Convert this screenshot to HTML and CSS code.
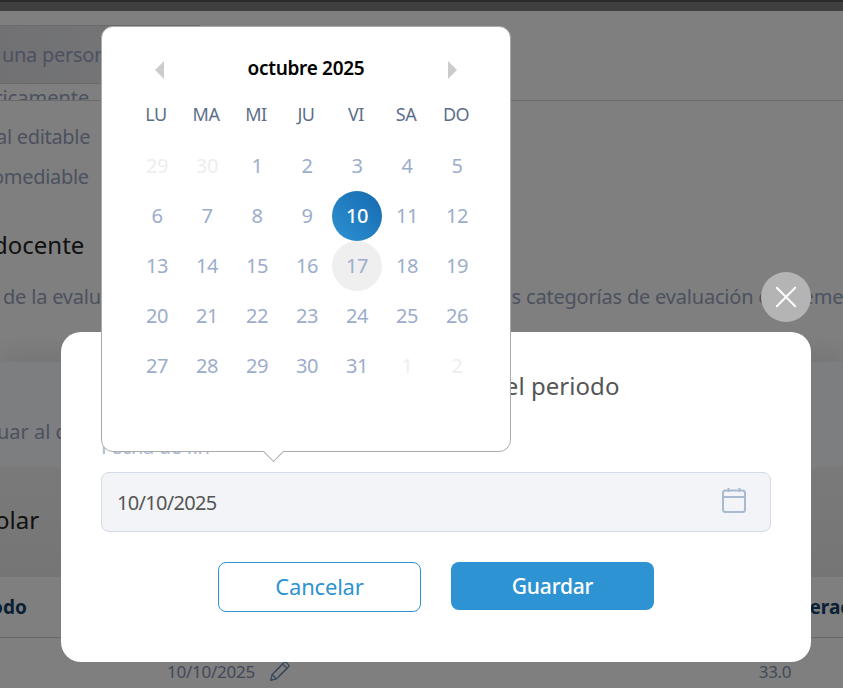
FILE: index.html
```html
<!DOCTYPE html>
<html lang="es">
<head>
<meta charset="utf-8">
<title>Fecha de fin del periodo</title>
<link rel="stylesheet" href="styles.css">
</head>
<body>
<div class="page">
  <div class="topbar"></div>
  <div class="search-row"><span class="search-text">una persona</span></div>
  <ul class="options">
    <li class="opt-cut"><span class="opt-first">tricamente</span></li>
    <li class="opt-a">al editable</li>
    <li class="opt-b">omediable</li>
  </ul>
  <h2 class="h-docente">docente</h2>
  <p class="desc">de la evaluación docente se calcula conforme a todas las categorías de evaluación en elementos</p>
  <div class="panel"><span class="panel-text">uar al docente</span></div>
  <div class="olar-section"><h2 class="h-olar">olar</h2></div>
  <div class="thead"><b class="th-a">odo</b><b class="th-b">Ponderación</b></div>
  <div class="trow">
    <span class="td-date">10/10/2025</span>
    <svg class="pencil" viewBox="0 0 24 24" fill="none" stroke="currentColor" stroke-width="1.5" stroke-linejoin="round" aria-hidden="true"><path d="M2 22l1.600-6.600L17.400 1.600a1.600 1.600 0 0 1 2.300 0l2.700 2.700a1.600 1.600 0 0 1 0 2.300L8.600 20.400z"/><path d="M15.600 3.400l5 5M3.600 15.400l5 5M6.500 12.500l10-10M11.500 17.500l10-10"/></svg>
    <span class="td-num">33.0</span>
  </div>
</div>

<div class="overlay">
  <div class="dialog-wrap">
    <button class="close" type="button" aria-label="Cerrar">
      <svg viewBox="0 0 24 24" fill="none" stroke="#fff" stroke-width="2.200" stroke-linecap="round" aria-hidden="true"><path d="M2 2l20 20M22 2L2 22"/></svg>
    </button>
    <div class="modal">
      <h3 class="modal-title">Editar la fecha de fin del periodo</h3>
      <label class="field-label">Fecha de fin</label>
      <div class="field">
        <span class="field-value">10/10/2025</span>
        <svg class="cal-icon" viewBox="0 0 24 26" fill="none" stroke="#a9b9d1" stroke-width="2" stroke-linejoin="round" aria-hidden="true"><rect x="1" y="3.500" width="22" height="21.500" rx="2.500"/><path d="M1 10h22M6.500 1v4M17.500 1v4"/></svg>
      </div>
      <div class="actions">
        <button class="btn btn-outline" type="button">Cancelar</button>
        <button class="btn btn-solid" type="button">Guardar</button>
      </div>
      <div class="calendar">
        <div class="cal-head">
          <span class="arrow arrow-left"></span>
          <span class="cal-title">octubre 2025</span>
          <span class="arrow arrow-right"></span>
        </div>
        <div class="cal-grid weekdays">
          <span>LU</span><span>MA</span><span>MI</span><span>JU</span><span>VI</span><span>SA</span><span>DO</span>
        </div>
        <div class="cal-grid days">
          <span class="off">29</span><span class="off">30</span><span>1</span><span>2</span><span>3</span><span>4</span><span>5</span>
          <span>6</span><span>7</span><span>8</span><span>9</span><span class="selected">10</span><span>11</span><span>12</span>
          <span>13</span><span>14</span><span>15</span><span>16</span><span class="today">17</span><span>18</span><span>19</span>
          <span>20</span><span>21</span><span>22</span><span>23</span><span>24</span><span>25</span><span>26</span>
          <span>27</span><span>28</span><span>29</span><span>30</span><span>31</span><span class="off">1</span><span class="off">2</span>
        </div>
        <span class="notch"></span>
      </div>
    </div>
  </div>
</div>
</body>
</html>
```

FILE: styles.css
```css
* { box-sizing: border-box; }
html, body { margin: 0; height: 100%; overflow: hidden; }
body { font-family: "Noto Sans", "Open Sans", sans-serif; background: #fff; }

/* page beneath the overlay */
.page { height: 688px; overflow: hidden; font-size: 20px; color: #98a3c0; }
.topbar { height: 11px; background: #7e7e7e; border-top: 2px solid #545454; }
.search-row {
  width: 200px; height: 59px; margin-top: 14px; padding-left: 2px;
  display: flex; align-items: center;
  background: linear-gradient(90deg, #e2e3e8, #eeeef0);
  border-top: 1px solid #d4d4d4; border-bottom: 1px solid #d4d4d4;
}
.search-text { letter-spacing: -.3px; }
.options { list-style: none; margin: 0; padding: 0; }
.opt-cut { height: 17px; overflow: hidden; border-bottom: 1px solid #d4d4d4; }
.opt-first { display: block; margin: -6px 0 0 -13px; line-height: 40px; }
.opt-a, .opt-b { height: 40px; line-height: 40px; letter-spacing: -.3px; }
.opt-a { margin: 16px 0 0 -4px; }
.opt-b { margin-left: -8px; }
.h-docente { margin: 32px 0 0 -7px; font-size: 24px; line-height: 32px; font-weight: 400; color: #222; }
.desc { margin: 21px 0 0 3px; line-height: 30px; white-space: nowrap; letter-spacing: -.2px; }
.panel {
  height: 105px; margin-top: 50px; padding: 55px 0 0; background: #fbfcfe;
  box-shadow: 0 -14px 20px rgba(0,0,0,.07);
  line-height: 30px;
}
.panel-text { margin-left: -3px; display: inline-block; }
.olar-section { height: 110px; padding-top: 37px; background: linear-gradient(180deg, #f4f4f4, #ebebeb); }
.h-olar { margin: 0 0 0 -5px; font-size: 24px; line-height: 32px; font-weight: 400; color: #222; }
.thead {
  height: 61px; display: flex; align-items: center; justify-content: space-between;
  background: #fff; border-bottom: 1px solid #d0d0d0; color: #14406a; font-size: 19px;
}
.th-a { margin-left: -9px; }
.th-b { margin-right: -37px; }
.trow { display: flex; align-items: center; height: 66px; padding-left: 167px; font-size: 17px; color: #8592b4; }
.td-date { letter-spacing: -.25px; }
.pencil { width: 21px; height: 21px; margin: 1px 0 0 14px; color: #6d8fb8; }
.td-num { margin-left: auto; margin-right: 52px; letter-spacing: -.4px; }

/* overlay + dialog */
.overlay { position: fixed; inset: 0; background: rgba(0,0,0,.5); overflow: hidden; }
.dialog-wrap { position: absolute; left: 61px; top: 332px; width: 750px; }
.close {
  position: absolute; right: 0; top: -60px; width: 50px; height: 50px; padding: 14px;
  border: 0; border-radius: 50%; background: #b5b4b4; display: flex;
}
.close svg { width: 22px; height: 22px; }
.modal {
  position: relative; height: 330px; padding: 34px 40px 0; background: #fff; border-radius: 20px;
}
.modal-title { margin: 0; text-align: center; font-size: 24px; line-height: 40px; font-weight: 400; color: #555; letter-spacing: .05px; white-space: nowrap; }
.field-label { display: block; margin-top: 28px; height: 30px; line-height: 26px; font-size: 20px; color: #a9b9d1; letter-spacing: -.4px; }
.field {
  height: 60px; margin-top: 8px; padding: 0 24px 0 15px; display: flex; align-items: center; justify-content: space-between;
  background: #f2f4f7; border: 1px solid #d2dbe6; border-radius: 8px;
}
.field-value { font-size: 20px; color: #555; letter-spacing: -.7px; }
.cal-icon { width: 24px; height: 26px; margin-top: -4px; }
.actions { display: flex; justify-content: center; gap: 30px; margin-top: 30px; align-items: flex-start; }
.btn { width: 203px; border-radius: 8px; font: 500 21px "Noto Sans", sans-serif; letter-spacing: -.2px; }
.btn-outline { height: 50px; padding-bottom: 4px; background: #fff; color: #2d93d3; border: 1px solid #2d93d3; font-weight: 400; font-size: 22px; }
.btn-solid { height: 48px; padding-bottom: 2px; background: #2d93d3; color: #fff; border: 0; }

/* date picker */
.calendar {
  position: absolute; left: 40px; top: -306px; width: 410px; height: 426px;
  padding: 21px 30px 0; background: #fff; border: 1px solid #aaa; border-radius: 12px;
}
.cal-head { display: flex; align-items: center; justify-content: space-between; height: 40px; padding: 0 23px; }
.cal-title { font-size: 19px; font-weight: 600; color: #000; letter-spacing: -.3px; }
.arrow { width: 0; height: 0; margin-top: 3px; border-top: 9px solid transparent; border-bottom: 9px solid transparent; }
.arrow-left { border-right: 9px solid #ccc; }
.arrow-right { border-left: 9px solid #ccc; }
.cal-grid { display: grid; grid-template-columns: repeat(7, 50px); }
.cal-grid span { display: flex; align-items: center; justify-content: center; }
.weekdays { margin-top: 6px; margin-left: -1px; height: 40px; font-size: 18px; color: #5d6f88; letter-spacing: -.5px; }
.weekdays span { height: 40px; }
.days { margin-top: 7px; grid-auto-rows: 50px; font-size: 20px; color: #9cadcb; letter-spacing: -.4px; }
.days span { border-radius: 50%; padding-bottom: 2px; }
.days .off { color: #eee; }
.days .selected { color: #fff; font-weight: 500; background: linear-gradient(45deg, #2d93d3, #1668af); }
.days .today { background: #efefef; }
.notch {
  position: absolute; left: 164px; bottom: -8px; width: 15px; height: 15px; background: #fff;
  border-right: 1px solid #aaa; border-bottom: 1px solid #aaa; transform: rotate(45deg);
}
```
